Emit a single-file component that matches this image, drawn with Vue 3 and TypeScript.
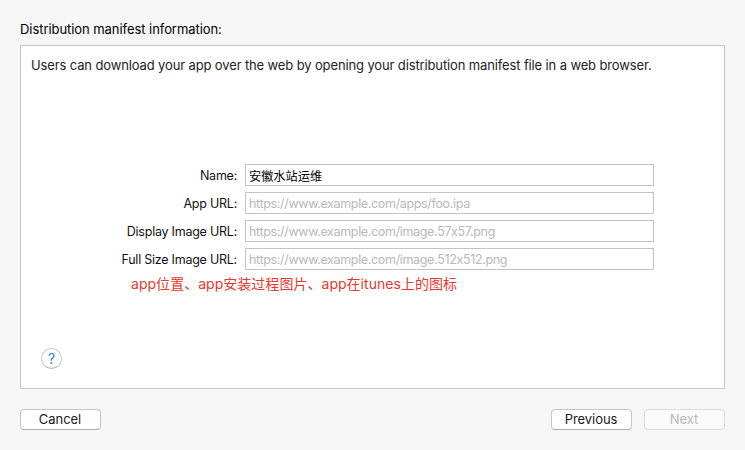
<script setup lang="ts">
import { ref } from 'vue'

interface Field {
  id: string
  label: string
  placeholder: string
  value: string
}

const fields = ref<Field[]>([
  { id: 'name', label: 'Name:', placeholder: '', value: '安徽水站运维' },
  { id: 'app', label: 'App URL:', placeholder: 'https://www.example.com/apps/foo.ipa', value: '' },
  { id: 'display', label: 'Display Image URL:', placeholder: 'https://www.example.com/image.57x57.png', value: '' },
  { id: 'full', label: 'Full Size Image URL:', placeholder: 'https://www.example.com/image.512x512.png', value: '' },
])
</script>

<template>
  <main class="sheet">
    <h1 class="title">Distribution manifest information:</h1>
    <section class="panel">
      <p class="intro">Users can download your app over the web by opening your distribution manifest file in a web browser.</p>
      <form class="form" @submit.prevent>
        <div v-for="f in fields" :key="f.id" class="row">
          <label class="label" :for="f.id">{{ f.label }}</label>
          <input :id="f.id" v-model="f.value" class="input" type="text" :placeholder="f.placeholder" />
        </div>
      </form>
      <p class="note">app位置、app安装过程图片、app在itunes上的图标</p>
      <button class="help" type="button">?</button>
    </section>
    <footer class="actions">
      <button class="btn" type="button">Cancel</button>
      <span class="spacer"></span>
      <button class="btn" type="button">Previous</button>
      <button class="btn" type="button" disabled>Next</button>
    </footer>
  </main>
</template>

<style>
body {
  background: #f6f6f6;
}
</style>

<style scoped>
.sheet {
  box-sizing: border-box;
  display: flex;
  flex-direction: column;
  width: 745px;
  height: 450px;
  padding: 21px 20px 19px;
  background: #f6f6f6;
  color: #111;
  font-family: Inter, 'Noto Sans CJK SC', sans-serif;
  font-size: 13px;
  font-feature-settings: 'calt' 0;
  line-height: 16px;
}
.title {
  margin: 0 0 8px;
  font-size: 13px;
  font-weight: 400;
  letter-spacing: -0.06px;
  color: #000;
}
.panel {
  box-sizing: border-box;
  display: flex;
  flex-direction: column;
  height: 344px;
  padding: 11px 10px 19px;
  border: 1px solid #c6c6c6;
  background: #fff;
}
.intro {
  margin: 0;
  color: #222;
  letter-spacing: -0.13px;
  white-space: nowrap;
}
.form {
  display: flex;
  flex-direction: column;
  gap: 6px;
  margin-top: 91px;
}
.row {
  display: flex;
  align-items: center;
  gap: 8px;
}
.label {
  width: 206px;
  padding-top: 1px;
  font-size: 12.5px;
  letter-spacing: -0.24px;
  line-height: 17px;
  text-align: right;
  white-space: nowrap;
}
.input {
  box-sizing: border-box;
  width: 409px;
  height: 22px;
  margin: 0;
  padding: 1px 3px 0;
  border: 1px solid #c4c4c4;
  border-radius: 0;
  outline: none;
  background: #fff;
  color: #000;
  font: inherit;
  font-feature-settings: 'calt' 0;
  font-size: 12.2px;
}
.input::placeholder {
  color: #b8b8b8;
  font-size: 12.5px;
  letter-spacing: -0.34px;
  opacity: 1;
}
.note {
  margin: 4px 0 0 100px;
  color: #e8382e;
  font-size: 14px;
  letter-spacing: 0.03px;
  line-height: 20px;
  white-space: nowrap;
}
.help {
  width: 21px;
  height: 21px;
  margin: auto 0 0 10px;
  padding: 0;
  border: 1px solid #c9c9c9;
  border-bottom-color: #b5b5b5;
  border-radius: 50%;
  background: #fff;
  color: #2b7fdc;
  font: inherit;
  font-size: 14px;
  line-height: 19px;
}
.actions {
  display: flex;
  gap: 12px;
  margin-top: 20px;
}
.spacer {
  flex: 1;
}
.btn {
  box-sizing: border-box;
  width: 81px;
  height: 21px;
  padding: 0 1px 2px 0;
  border: 1px solid #c6c6c6;
  border-bottom-color: #acacac;
  border-radius: 4px;
  background: #fff;
  color: #1a1a1a;
  font: inherit;
  letter-spacing: -0.06px;
}
.btn:disabled {
  border-color: #dcdcdc;
  background: #fafafa;
  color: #b9b9b9;
}
</style>
